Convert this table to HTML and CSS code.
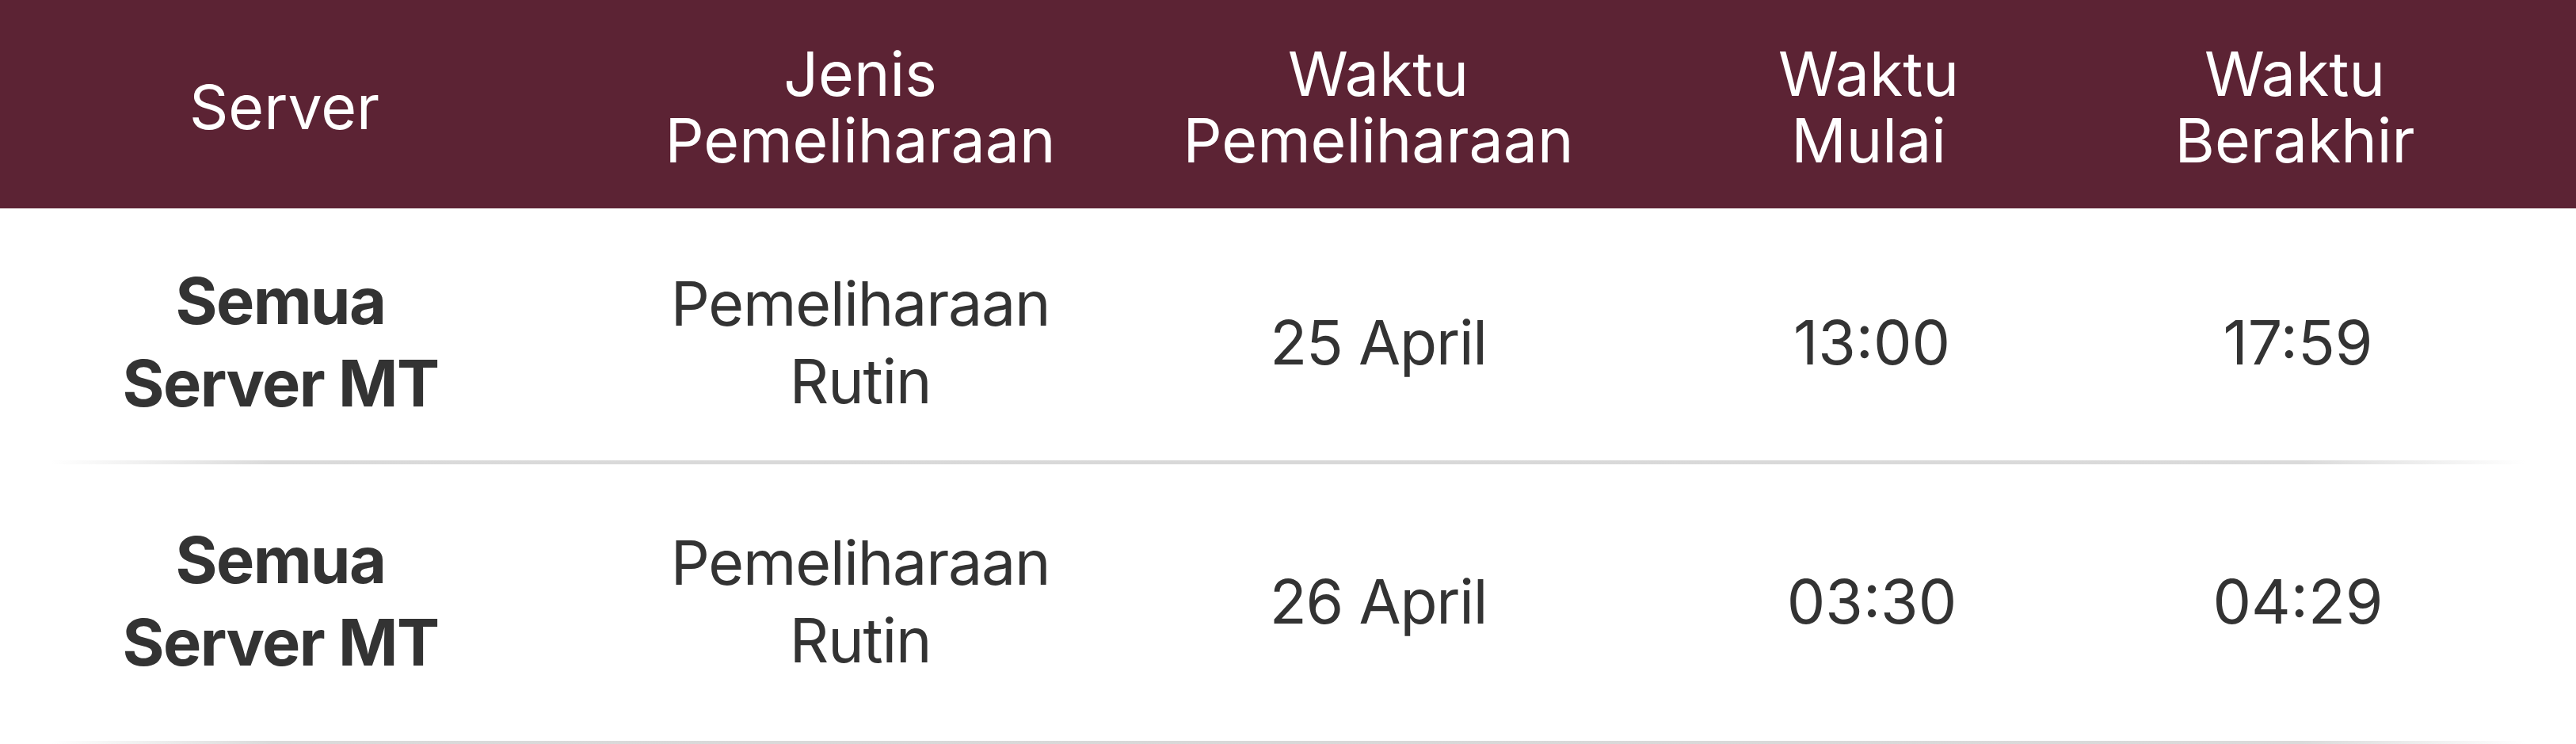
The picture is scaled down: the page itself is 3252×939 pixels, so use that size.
FILE: index.html
```html
<!DOCTYPE html>
<html lang="id">
<head>
<meta charset="utf-8">
<title>Jadwal Pemeliharaan</title>
<link rel="stylesheet" href="styles.css">
</head>
<body>
<div class="schedule">
  <div class="row head">
    <div class="cell">Server</div>
    <div class="cell">Jenis<br>Pemeliharaan</div>
    <div class="cell">Waktu<br>Pemeliharaan</div>
    <div class="cell">Waktu<br>Mulai</div>
    <div class="cell">Waktu<br>Berakhir</div>
  </div>
  <div class="row item item-first">
    <div class="cell server">Semua<br>Server MT</div>
    <div class="cell">Pemeliharaan<br>Rutin</div>
    <div class="cell">25 April</div>
    <div class="cell time">13:00</div>
    <div class="cell time">17:59</div>
  </div>
  <div class="rule"></div>
  <div class="row item">
    <div class="cell server">Semua<br>Server MT</div>
    <div class="cell">Pemeliharaan<br>Rutin</div>
    <div class="cell">26 April</div>
    <div class="cell time">03:30</div>
    <div class="cell time">04:29</div>
  </div>
  <div class="rule"></div>
</div>
</body>
</html>
```

FILE: styles.css
```css
html, body {
  margin: 0;
  padding: 0;
  background: #ffffff;
}

body {
  font-family: Inter, "Liberation Sans", sans-serif;
  color: #333333;
  width: 3252px;
  overflow: hidden;
}

.schedule {
  display: flex;
  flex-direction: column;
}

.row {
  display: grid;
  grid-template-columns: 718px 736px 572px 666px 410px;
  align-items: center;
}

.cell {
  text-align: center;
}

.head {
  background: #5c2334;
  color: #ffffff;
  font-size: 77px;
  line-height: 84px;
  font-weight: 400;
  padding: 51px 0 44px;
}

.item {
  font-size: 77px;
  line-height: 98px;
  font-weight: 400;
  letter-spacing: -1.2px;
  padding: 69px 0 72px;
}

.item-first {
  padding: 65px 0 45px;
}

.server {
  font-size: 81px;
  line-height: 104px;
  font-weight: 700;
  letter-spacing: -1.5px;
  transform: translateX(-5px);
}

.time {
  letter-spacing: 0;
  transform: translateX(4px);
}

.rule {
  height: 5px;
  margin: 0 64px;
  background: linear-gradient(to right,
    rgba(216, 216, 216, 0) 0%,
    #dadada 9%,
    #d8d8d8 50%,
    #dadada 91%,
    rgba(216, 216, 216, 0) 100%);
}
```
